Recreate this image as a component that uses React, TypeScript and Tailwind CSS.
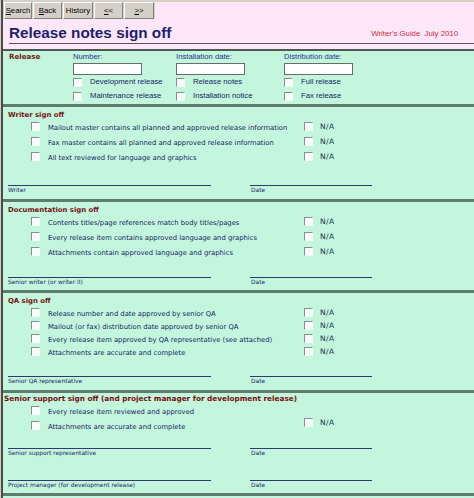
import React from "react";

const Check = () => (
  <span className="block h-[9px] w-[9px] shrink-0 border-t border-l border-r border-b border-t-[#8c8c8c] border-l-[#8c8c8c] border-r-[#f2fbf6] border-b-[#f2fbf6] bg-[#fbfbfb]" />
);

const Divider = () => <div className="h-[3px] bg-[#5f7d6b]" />;

type ItemProps = { text: string; row: string; na?: boolean; naUp?: boolean };

const Item = ({ text, row, na = true, naUp = false }: ItemProps) => (
  <div className={"flex " + row}>
    <div className="ml-[28px] flex w-[273px]">
      <Check />
      <span className="ml-[8px] mt-[2px] whitespace-nowrap font-['DejaVu_Sans',sans-serif] text-[6.8px] leading-[9px] text-[#141c66]">
        {text}
      </span>
    </div>
    {na && (
      <div className={naUp ? "flex -mt-[3px]" : "flex"}>
        <Check />
        <span className="ml-[7px] font-['DejaVu_Sans',sans-serif] text-[7.5px] leading-[9px] tracking-[0.4px] text-[#222c50]">
          N/A
        </span>
      </div>
    )}
  </div>
);

const Heading = ({ children }: { children: React.ReactNode }) => (
  <div className="ml-[5px] mt-[3px] font-['DejaVu_Sans',sans-serif] text-[6.9px] font-bold leading-[10px] text-[#741010]">
    {children}
  </div>
);

const Sign = ({ label, gap }: { label: string; gap: string }) => (
  <div className={"flex " + gap}>
    <div className="ml-[5px] w-[203px]">
      <div className="h-px bg-[#2e3a6c]" />
      <div className="font-['DejaVu_Sans',sans-serif] text-[5.9px] leading-[8px] text-[#18266a]">{label}</div>
    </div>
    <div className="ml-[39px] w-[122px]">
      <div className="h-px bg-[#2e3a6c]" />
      <div className="pl-[1px] font-['DejaVu_Sans',sans-serif] text-[5.9px] leading-[8px] text-[#18266a]">Date</div>
    </div>
  </div>
);

const ToolButton = ({ children, w }: { children: React.ReactNode; w: string }) => (
  <div
    className={
      "flex h-[17px] items-center justify-center border-t border-l border-r border-b border-t-white border-l-white border-r-[#808080] border-b-[#808080] bg-[#d4d0c8] font-['Liberation_Sans',Arial,sans-serif] text-[7.8px] text-black " +
      w
    }
  >
    {children}
  </div>
);

type ColProps = { label: string; a: string; b: string; w: string };

const Col = ({ label, a, b, w }: ColProps) => (
  <div className={"font-['Liberation_Sans',Arial,sans-serif] text-[7.7px] text-[#22338c] " + w}>
    <div className="leading-[10px]">{label}</div>
    <div className="mt-[1px] h-[12px] w-[69px] border border-[#6a6a6a] bg-white" />
    <div className="mt-[2px] flex h-[10px] items-center">
      <Check />
      <span className="ml-[8px] leading-[10px] text-[#141c66]">{a}</span>
    </div>
    <div className="mt-[4px] flex h-[10px] items-center">
      <Check />
      <span className="ml-[8px] leading-[10px] text-[#141c66]">{b}</span>
    </div>
  </div>
);

export default function App() {
  return (
    <div className="h-[498px] w-[474px] overflow-hidden bg-[#d4d0c8] pl-[1px]">
      <div className="flex h-full flex-col border-l-2 border-[#4a4a4a]">
        <div className="h-[2px] bg-[#d4d0c8]" />
        <div className="bg-[#fde7f9]">
          <div className="flex">
            <div className="flex gap-[1px] bg-[#d4d0c8] px-[1px]">
              <ToolButton w="w-[28px]">
                <span><u>S</u>earch</span>
              </ToolButton>
              <ToolButton w="w-[29px]">
                <span><u>B</u>ack</span>
              </ToolButton>
              <ToolButton w="w-[30px]">History</ToolButton>
              <ToolButton w="w-[29px]">
                <span><u>&lt;</u>&lt;</span>
              </ToolButton>
              <ToolButton w="w-[30px]">
                <span><u>&gt;</u>&gt;</span>
              </ToolButton>
            </div>
          </div>
          <div className="mt-[5px] flex">
            <div className="ml-[6px] font-['Liberation_Sans',Arial,sans-serif] text-[15.3px] font-bold leading-[17px] text-[#1d1f6e]">
              Release notes sign off
            </div>
            <div className="ml-auto mr-[16px] mt-[5px] whitespace-pre font-['Liberation_Sans',Arial,sans-serif] text-[7.8px] leading-[10px] text-[#d42a3a]">
              Writer's Guide  July 2010
            </div>
          </div>
          <div className="ml-[6px] mt-[2px] h-px bg-[#555555]" />
          <div className="h-[5px]" />
          <div className="h-[2px] bg-[#4d5a54]" />
        </div>

        <div className="flex-1 bg-[#c4f6dd]">
          {/* Release */}
          <div className="h-[53px] pt-[1px]">
            <div className="flex">
              <div className="ml-[6px] w-[64px] font-['DejaVu_Sans',sans-serif] text-[7.1px] font-bold leading-[10px] text-[#741a10]">
                Release
              </div>
              <Col label="Number:" a="Development release" b="Maintenance release" w="w-[103px]" />
              <Col label="Installation date:" a="Release notes" b="Installation notice" w="w-[108px]" />
              <Col label="Distribution date:" a="Full release" b="Fax release" w="w-[100px]" />
            </div>
          </div>
          <Divider />

          {/* Writer */}
          <Heading>Writer sign off</Heading>
          <div className="mt-[2px]">
            <Item row="h-[15px]" text="Mailout master contains all planned and approved release information" />
            <Item row="h-[15px]" text="Fax master contains all planned and approved release information" />
            <Item row="h-[15px]" text="All text reviewed for language and graphics" />
          </div>
          <Sign label="Writer" gap="mt-[18px]" />
          <div className="mt-[5px]">
            <Divider />
          </div>

          {/* Documentation */}
          <Heading>Documentation sign off</Heading>
          <div className="mt-[2px]">
            <Item row="h-[15px]" text="Contents titles/page references match body titles/pages" />
            <Item row="h-[15px]" text="Every release item contains approved language and graphics" />
            <Item row="h-[15px]" text="Attachments contain approved language and graphics" />
          </div>
          <Sign label="Senior writer (or writer II)" gap="mt-[15px]" />
          <div className="mt-[4px]">
            <Divider />
          </div>

          {/* QA */}
          <Heading>QA sign off</Heading>
          <div className="mt-[2px]">
            <Item row="h-[13px]" text="Release number and date approved by senior QA" />
            <Item row="h-[13px]" text="Mailout (or fax) distribution date approved by senior QA" />
            <Item row="h-[13px]" text="Every release item approved by QA representative (see attached)" />
            <Item row="h-[13px]" text="Attachments are accurate and complete" />
          </div>
          <Sign label="Senior QA representative" gap="mt-[16px]" />
          <div className="mt-[5px]">
            <Divider />
          </div>

          {/* Senior support */}
          <div className="ml-[1px] mt-[1px] font-['DejaVu_Sans',sans-serif] text-[7.3px] font-bold leading-[10px] text-[#741010]">
            Senior support sign off (and project manager for development release)
          </div>
          <div className="mt-[2px]">
            <Item row="h-[15px]" na={false} text="Every release item reviewed and approved" />
            <Item row="h-[15px]" naUp text="Attachments are accurate and complete" />
          </div>
          <Sign label="Senior support representative" gap="mt-[12px]" />
          <Sign label="Project manager (for development release)" gap="mt-[23px]" />
          <div className="mt-[4px]">
            <Divider />
          </div>
        </div>
      </div>
    </div>
  );
}
